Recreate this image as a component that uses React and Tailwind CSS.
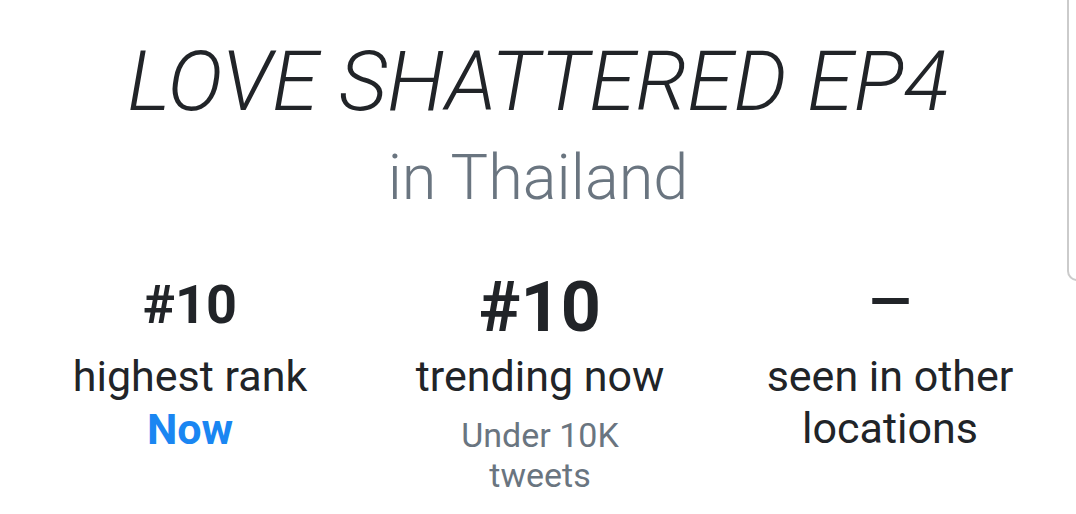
import React from "react";

export default function App() {
  return (
    <div
      className="relative w-[1076px] h-[514px] bg-white overflow-hidden text-[#212428]"
      style={{ fontFamily: "Roboto, 'Liberation Sans', sans-serif" }}
    >
      <div className="absolute left-[1067px] top-[-20px] w-[30px] h-[301px] border-l-2 border-b-2 border-[#cbcbcb] rounded-bl-[10px]" />
      <div className="flex flex-col items-center pt-[34px]">
        <h1 className="text-[84px] leading-[96px] font-light italic">
          LOVE SHATTERED EP4
        </h1>
        <div className="text-[63px] leading-[80px] font-light text-[#6a7580] mt-[8px]">
          in Thailand
        </div>
      </div>
      <div className="grid grid-cols-3 pl-[15px] pr-[11px] mt-[58px]">
        <div className="flex flex-col items-center">
          <div className="h-[66px] flex items-end">
            <div className="text-[54px] leading-[54px] font-bold mb-[10px]">#10</div>
          </div>
          <div className="text-[43px] leading-[52px] mt-[8px]">highest rank</div>
          <div className="text-[43px] leading-[52px] font-bold text-[#1a86f2] mt-[1px]">Now</div>
        </div>
        <div className="flex flex-col items-center">
          <div className="h-[66px] flex items-end">
            <div className="text-[70px] leading-[70px] font-bold">#10</div>
          </div>
          <div className="text-[43px] leading-[52px] mt-[8px]">trending now</div>
          <div className="text-[34px] leading-[40px] text-[#6a7580] text-center mt-[13px]">
            Under 10K
            <br />
            tweets
          </div>
        </div>
        <div className="flex flex-col items-center">
          <div className="h-[66px] flex items-end">
            <div className="text-[54px] leading-[54px] font-bold mb-[13px]">—</div>
          </div>
          <div className="text-[43px] leading-[52px] mt-[8px] text-center">
            seen in other
            <br />
            locations
          </div>
        </div>
      </div>
    </div>
  );
}
